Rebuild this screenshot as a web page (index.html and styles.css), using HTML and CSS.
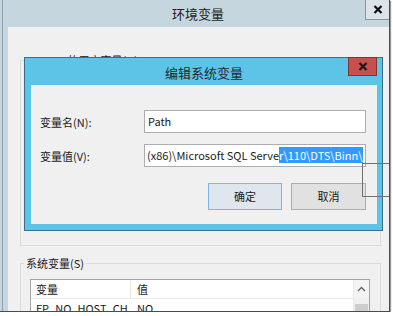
FILE: index.html
```html
<!DOCTYPE html>
<html lang="zh-CN">
<head>
<meta charset="utf-8">
<title>环境变量</title>
<link rel="stylesheet" href="styles.css">
</head>
<body>
<div class="screen">
  <div class="win">
    <div class="win-title">
      <span class="spacer"></span>
      <span class="win-title-text">环境变量</span>
      <div class="win-close">
        <svg width="10" height="9" viewBox="0 0 10 9"><path d="M1.5 1 L8.5 8 M8.5 1 L1.5 8" stroke="#111" stroke-width="2.2" fill="none"/></svg>
      </div>
    </div>
    <div class="win-body">
      <fieldset class="group group-user">
        <legend>test 的用户变量(U)</legend>
      </fieldset>
      <fieldset class="group group-sys">
        <legend>系统变量(S)</legend>
        <div class="list">
          <div class="list-main">
            <div class="list-row list-head"><span class="c1">变量</span><span class="c2">值</span></div>
            <div class="list-row"><span class="c1">FP_NO_HOST_CH...</span><span class="c2">NO</span></div>
          </div>
          <div class="scroll">
            <div class="scroll-up">
              <svg width="9" height="6" viewBox="0 0 9 6"><path d="M1 5 L4.5 1.5 L8 5" stroke="#606060" stroke-width="1.3" fill="none"/></svg>
            </div>
            <div class="scroll-thumb"></div>
          </div>
        </div>
      </fieldset>
    </div>
  </div>

  <div class="dialog">
    <div class="dlg-title">
      <span class="spacer"></span>
      <span class="dlg-title-text">编辑系统变量</span>
      <div class="dlg-close">
        <svg width="10" height="9" viewBox="0 0 10 9"><path d="M1.5 1 L8.5 8 M8.5 1 L1.5 8" stroke="#1a1a1a" stroke-width="2.2" fill="none"/></svg>
      </div>
    </div>
    <div class="dlg-body">
      <div class="form">
        <label class="lbl">变量名(N):</label>
        <div class="field">Path</div>
        <label class="lbl">变量值(V):</label>
        <div class="field field-value"><span>(x86)\Microsoft SQL Serve</span><span class="sel">r\110\DTS\Binn\</span></div>
      </div>
      <div class="buttons">
        <div class="btn btn-default">确定</div>
        <div class="btn btn-cancel">取消</div>
      </div>
    </div>
  </div>

  <div class="focus-rect"></div>
</div>
</body>
</html>
```

FILE: styles.css
```css
* {
  box-sizing: border-box;
}

html, body {
  margin: 0;
  padding: 0;
  background: #ffffff;
}

body {
  font-family: "Noto Sans CJK SC", "Noto Sans", sans-serif;
  font-size: 11px;
  color: #1a1a1a;
}

.screen {
  position: relative;
  width: 390px;
  height: 312px;
  padding-left: 2px;
  background: #c6d6df;
  overflow: hidden;
  border-right: 1px solid #4a4a4a;
  border-bottom: 1px solid #4a4a4a;
  box-shadow: 1px 1px 1px #9a9a9a;
}

.win {
  display: flex;
  flex-direction: column;
  height: 100%;
  border-left: 1px solid #8ea2ad;
}

.win-title {
  display: grid;
  grid-template-columns: 1fr auto 1fr;
  height: 27px;
  flex: none;
}

.win-title-text {
  font-size: 13px;
  line-height: 27px;
  color: #222;
  padding-left: 4px;
}

.win-close {
  justify-self: end;
  width: 24px;
  height: 20px;
  background: #dce4e9;
  border: 1px solid #8797a1;
  border-top: none;
  border-right: none;
  display: flex;
  align-items: center;
  justify-content: center;
}

.win-body {
  flex: 1;
  margin-left: 5px;
  background: #f0f0f0;
  display: flex;
  flex-direction: column;
}

.group {
  margin: 0 8px 0 12px;
  border: 1px solid #dadada;
  min-inline-size: 0;
}

.group legend {
  font-size: 11px;
  line-height: 16px;
  padding: 0 2px;
  color: #1a1a1a;
}

.group-user {
  margin-top: 25px;
  height: 194px;
  padding: 0;
}

.group-user legend {
  margin-left: 23px;
}

.group-sys {
  margin-top: 9px;
  flex: 1;
  padding: 8px 10px 0 9px;
  border-bottom: none;
}

.group-sys legend {
  margin-left: -6px;
}

.list {
  display: flex;
  border: 1px solid #a3a3a3;
  background: #fff;
  height: 60px;
}

.list-main {
  flex: 1;
  min-width: 0;
}

.list-row {
  display: flex;
  height: 19px;
  line-height: 19px;
  border-bottom: 1px solid #eaeaea;
}

.list-row .c1 {
  flex: none;
  width: 100px;
  padding-left: 5px;
  white-space: nowrap;
  overflow: hidden;
}

.list-head .c1 {
  border-right: 1px solid #e3e3e3;
}

.list-row .c2 {
  padding-left: 6px;
}

.scroll {
  width: 16px;
  background: #f0f0f0;
  border-left: 1px solid #e8e8e8;
}

.scroll-up {
  height: 18px;
  display: flex;
  align-items: center;
  justify-content: center;
  background: #f4f4f4;
}

.scroll-thumb {
  margin: 6px 1px 0;
  height: 20px;
  background: #cdcdcd;
}

.dialog {
  position: absolute;
  left: 24px;
  top: 57px;
  width: 359px;
  height: 174px;
  border: 1px solid #3b6f87;
  background: #5dc3e7;
  padding: 0 5px 6px 6px;
  display: flex;
  flex-direction: column;
}

.dlg-title {
  display: grid;
  grid-template-columns: 1fr auto 1fr;
  height: 27px;
  flex: none;
}

.dlg-title-text {
  font-size: 13px;
  line-height: 29px;
  color: #1e2a30;
}

.dlg-close {
  justify-self: end;
  margin-top: -1px;
  width: 29px;
  height: 19px;
  background: #c6504e;
  border: 1px solid #7d3634;
  display: flex;
  align-items: center;
  justify-content: center;
}

.dlg-body {
  flex: 1;
  background: #f0f0f0;
  padding: 25px 11px 0 9px;
}

.form {
  display: grid;
  grid-template-columns: 104px 222px;
  row-gap: 11px;
  align-items: center;
}

.lbl {
  line-height: 16px;
}

.field {
  height: 23px;
  border: 1px solid #abadb3;
  background: #fff;
  line-height: 21px;
  padding: 0 3px;
  white-space: nowrap;
  overflow: hidden;
}

.field-value {
  padding-left: 2px;
}

.sel {
  background: #3399ff;
  color: #fff;
}

.buttons {
  display: flex;
  justify-content: flex-end;
  gap: 9px;
  margin-top: 16px;
}

.btn {
  width: 75px;
  height: 27px;
  line-height: 25px;
  text-align: center;
  border: 1px solid #adadad;
  background: #e1e1e1;
}

.btn-default {
  width: 74px;
  border-color: #7eb4ea;
  background: #dfe6ed;
}

.focus-rect {
  position: absolute;
  left: 362px;
  top: 163px;
  width: 28px;
  height: 34px;
  border: 1px solid #707070;
  border-right: none;
}
```
